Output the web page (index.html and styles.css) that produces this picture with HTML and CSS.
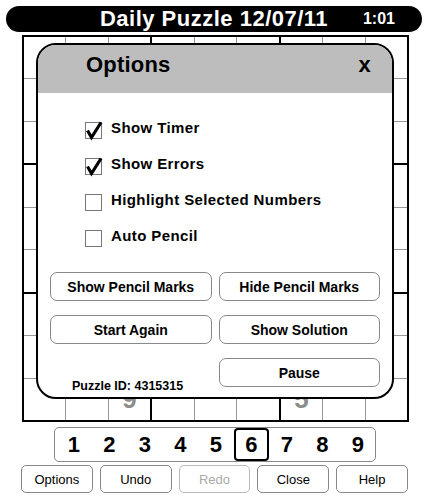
FILE: index.html
```html
<!DOCTYPE html>
<html lang="en">
<head>
  <meta charset="UTF-8">
  <title>Daily Puzzle 12/07/11</title>
  <meta name="viewport" content="width=device-width, initial-scale=1.0" />
  <link rel="stylesheet" href="styles.css">
</head>
<body>

  <div class="titlebar">
    <div class="title">Daily Puzzle 12/07/11</div>
    <div class="timer">1:01</div>
  </div>

  <div class="board-wrap">
    <div class="board" id="board"></div>

    <!-- options popup, sits over the board -->
    <div class="dialog">
      <div class="dialog-head">
        <span class="dialog-title">Options</span>
        <span class="dialog-close">x</span>
      </div>

      <div class="options">
        <label class="option">
          <span class="check">
            <svg viewBox="0 0 17 17" width="17" height="17"><path d="M2.5 8.5 L6.5 15.5 L16 0.5" /></svg>
          </span>
          Show Timer
        </label>
        <label class="option">
          <span class="check">
            <svg viewBox="0 0 17 17" width="17" height="17"><path d="M2.5 8.5 L6.5 15.5 L16 0.5" /></svg>
          </span>
          Show Errors
        </label>
        <label class="option"><span class="check"></span>Highlight Selected Numbers</label>
        <label class="option"><span class="check"></span>Auto Pencil</label>
      </div>

      <div class="actions">
        <button class="action">Show Pencil Marks</button>
        <button class="action">Hide Pencil Marks</button>
        <button class="action">Start Again</button>
        <button class="action">Show Solution</button>
        <div class="puzzle-id">Puzzle ID: 4315315</div>
        <button class="action">Pause</button>
      </div>
    </div>
  </div>

  <div class="numbers">
    <span>1</span>
    <span>2</span>
    <span>3</span>
    <span>4</span>
    <span>5</span>
    <span class="selected">6</span>
    <span>7</span>
    <span>8</span>
    <span>9</span>
  </div>

  <div class="toolbar">
    <button class="tool">Options</button>
    <button class="tool">Undo</button>
    <button class="tool off">Redo</button>
    <button class="tool">Close</button>
    <button class="tool">Help</button>
  </div>

  <script>
    // 81 cells, row by row, '.' = empty
    const puzzle =
      '.........' +
      '........9' +
      '........5' +
      '........3' +
      '.........' +
      '.........' +
      '........9' +
      '........1' +
      '..9...5..';

    const board = document.getElementById('board');
    for (let b = 0; b < 9; b++) {
      const box = document.createElement('div');
      box.className = 'box';
      for (let c = 0; c < 9; c++) {
        const row = Math.floor(b / 3) * 3 + Math.floor(c / 3);
        const col = (b % 3) * 3 + (c % 3);
        const ch = puzzle[row * 9 + col];
        const cell = document.createElement('div');
        cell.className = 'cell';
        if (ch !== '.') cell.textContent = ch;
        box.appendChild(cell);
      }
      board.appendChild(box);
    }
  </script>

</body>
</html>
```

FILE: styles.css
```css
body {
  margin: 0;
  background: #fff;
  color: #000;
  font-family: "Liberation Sans", Arial, sans-serif;
}
.titlebar {
  margin: 6px 7px 0 6px;
  height: 26px;
  background: #000;
  border-radius: 13px;
  color: #fff;
  display: grid;
  grid-template-columns: 1fr auto 1fr;
  align-items: center;
}
.title {
  grid-column: 2;
  font-size: 22px;
  font-weight: bold;
  letter-spacing: 0.5px;
  line-height: 26px;
}
.timer {
  grid-column: 3;
  justify-self: end;
  padding-right: 27px;
  font-size: 16px;
  font-weight: bold;
}
.board-wrap {
  position: relative;
  margin: 3px 0 0 22px;
  width: 387px;
}
.board {
  box-sizing: border-box;
  width: 387px;
  height: 387px;
  border: 2px solid #000;
  background: #000;
  display: grid;
  grid-template-columns: repeat(3, 1fr);
  grid-template-rows: repeat(3, 1fr);
  gap: 2px;
}
.box {
  background: #999;
  display: grid;
  grid-template-columns: repeat(3, 1fr);
  grid-template-rows: repeat(3, 1fr);
  gap: 1px;
}
.cell {
  background: #fff;
  display: flex;
  align-items: center;
  justify-content: center;
  font-size: 26px;
  font-weight: bold;
  color: #8c8c8c;
}
.dialog {
  position: absolute;
  left: 14px;
  top: 8px;
  box-sizing: border-box;
  width: 358px;
  height: 356px;
  border: 2px solid #000;
  border-radius: 20px;
  background: #fff;
  overflow: hidden;
}
.dialog-head {
  height: 48px;
  box-sizing: border-box;
  padding: 7px 21px 0 48px;
  background: #bdbdbd;
  display: flex;
  justify-content: space-between;
  font-size: 22px;
  font-weight: bold;
  letter-spacing: 0.2px;
  line-height: 25px;
}
.options {
  display: flex;
  flex-direction: column;
  gap: 16px;
  padding: 26px 0 0 47px;
}
.option {
  display: flex;
  align-items: flex-start;
  gap: 9px;
  font-size: 15px;
  font-weight: bold;
  letter-spacing: 0.4px;
  line-height: 17px;
}
.check {
  box-sizing: border-box;
  width: 17px;
  height: 17px;
  margin-top: 3px;
  border: 1px solid #777;
  background: #fff;
}
.check svg {
  display: block;
  margin: -1px 0 0 -1px;
  overflow: visible;
}
.check path {
  fill: none;
  stroke: #000;
  stroke-width: 3.2;
  stroke-linejoin: miter;
}
.actions {
  display: grid;
  grid-template-columns: 1fr 1fr;
  gap: 14px 7px;
  padding: 25px 12px 0 12px;
}
.action {
  height: 29px;
  border: 1px solid #888;
  border-radius: 7px;
  background: #fff;
  color: #000;
  font-family: inherit;
  font-size: 14px;
  font-weight: bold;
  padding: 0;
}
.puzzle-id {
  align-self: end;
  margin-bottom: -6px;
  padding-left: 22px;
  font-size: 12.5px;
  font-weight: bold;
  line-height: 14px;
}
.numbers {
  margin: 5px 0 0 54px;
  width: 322px;
  height: 35px;
  box-sizing: border-box;
  border: 1px solid #888;
  border-radius: 5px;
  padding-left: 1px;
  display: grid;
  grid-template-columns: repeat(9, 35.5px);
}
.numbers span {
  display: flex;
  align-items: center;
  justify-content: center;
  font-size: 22px;
  font-weight: bold;
}
.numbers .selected {
  border: 2px solid #000;
  border-radius: 4px;
}
.toolbar {
  margin: 3px 0 0 21px;
  width: 387px;
  display: grid;
  grid-template-columns: repeat(5, 1fr);
  gap: 7px;
}
.tool {
  height: 28px;
  border: 1px solid #888;
  border-radius: 5px;
  background: #fff;
  color: #000;
  font-family: inherit;
  font-size: 13px;
  padding: 0;
}
.tool.off {
  color: #aaa;
  border-color: #bbb;
}
```
